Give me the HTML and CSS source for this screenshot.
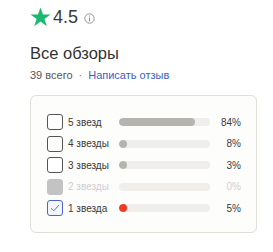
FILE: index.html
```html
<!DOCTYPE html>
<html lang="ru">
<head>
<meta charset="utf-8">
<link rel="stylesheet" href="styles.css">
</head>
<body>
<div class="page">
  <div class="top">
    <svg class="star" width="21" height="20" viewBox="0 0 24 23"><path d="M12 0.5l2.9 8.1h8.6l-7 5.1 2.7 8.3-7.2-5.2-7.2 5.2 2.7-8.3-7-5.1h8.6z" fill="#1cb870"/></svg>
    <span class="score">4.5</span>
    <svg class="info" width="11" height="11" viewBox="0 0 11 11"><circle cx="5.5" cy="5.5" r="4.7" fill="none" stroke="#8b8b8b" stroke-width="0.9"/><line x1="5.5" y1="4.6" x2="5.5" y2="8.3" stroke="#8b8b8b" stroke-width="1"/><circle cx="5.5" cy="3.1" r="0.65" fill="#8b8b8b"/></svg>
  </div>
  <h1 class="title">Все обзоры</h1>
  <div class="sub"><span class="count">39 всего</span><span class="dot">·</span><a class="link" href="#">Написать отзыв</a></div>
  <div class="card">
    <div class="row">
      <span class="cb"></span><span class="label">5 звезд</span>
      <span class="track"><span class="fill" style="width:84%"></span></span><span class="pct">84%</span>
    </div>
    <div class="row">
      <span class="cb"></span><span class="label">4 звезды</span>
      <span class="track"><span class="fill" style="width:8%"></span></span><span class="pct">8%</span>
    </div>
    <div class="row">
      <span class="cb"></span><span class="label">3 звезды</span>
      <span class="track"><span class="fill" style="width:3%"></span></span><span class="pct">3%</span>
    </div>
    <div class="row disabled">
      <span class="cb"></span><span class="label">2 звезды</span>
      <span class="track"></span><span class="pct">0%</span>
    </div>
    <div class="row checked">
      <span class="cb"><svg width="10" height="8" viewBox="0 0 10 8"><path d="M1 4.2l2.8 2.6L9 1" fill="none" stroke="#4d63c6" stroke-width="0.9"/></svg></span><span class="label">1 звезда</span>
      <span class="track"><span class="fill red" style="width:5%"></span></span><span class="pct">5%</span>
    </div>
  </div>
</div>
</body>
</html>
```

FILE: styles.css
```css
html, body {
  margin: 0;
  padding: 0;
  background: #ffffff;
}
body {
  font-family: "Liberation Sans", Arial, sans-serif;
  color: #333333;
}
.page {
  padding: 7px 0 0 30px;
  width: 227px;
}
.top {
  display: flex;
  align-items: center;
  height: 20px;
}
.star {
  display: block;
}
.score {
  font-size: 18px;
  line-height: 20px;
  margin-left: 2px;
  color: #3a3a3a;
}
.info {
  display: block;
  margin-left: 6px;
  margin-top: 2px;
}
.title {
  margin: 16px 0 0 0;
  font-size: 16.5px;
  line-height: 20px;
  font-weight: normal;
  color: #333333;
}
.sub {
  margin-top: 5px;
  font-size: 11px;
  line-height: 14px;
  color: #555555;
  display: flex;
  align-items: center;
}
.dot {
  margin: 0 6px;
  color: #777777;
}
.link {
  color: #3d5ec6;
  text-decoration: none;
}
.card {
  margin-top: 13px;
  border: 1px solid #e2ded8;
  border-radius: 6px;
  background: #fdfdfc;
  padding: 18px 15px 16px 16px;
  display: flex;
  flex-direction: column;
  gap: 5.5px;
}
.row {
  display: grid;
  grid-template-columns: 16px 46px 91px 1fr;
  column-gap: 5px;
  align-items: center;
  height: 16px;
  font-size: 10px;
  color: #3a3a3a;
}
.cb {
  box-sizing: border-box;
  width: 16px;
  height: 16px;
  border: 1px solid #555555;
  border-radius: 3px;
  background: #ffffff;
  display: flex;
  align-items: center;
  justify-content: center;
}
.track {
  display: block;
  height: 8px;
  border-radius: 4px;
  background: #f0eeeb;
  overflow: hidden;
}
.fill {
  display: block;
  height: 8px;
  min-width: 8px;
  border-radius: 4px;
  background: #b5b4ae;
}
.fill.red {
  background: #f23a22;
}
.pct {
  text-align: right;
}
.disabled .cb {
  border-color: #c3c3c3;
  background: #c3c3c3;
}
.disabled .label,
.disabled .pct {
  color: #cfcfcf;
}
.checked .cb {
  border-color: #4d63c6;
  background: #f4f6fd;
}
```
